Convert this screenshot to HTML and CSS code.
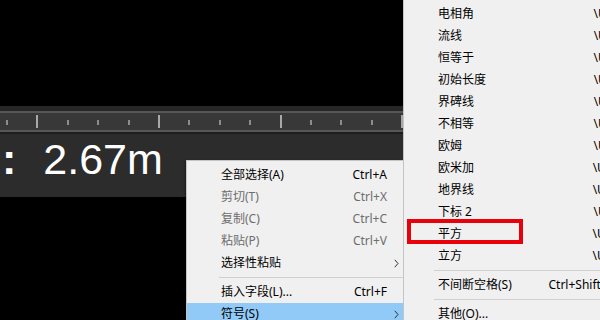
FILE: index.html
```html
<!DOCTYPE html>
<html lang="zh-CN">
<head>
<meta charset="utf-8">
<title>CAD 符号菜单</title>
<link rel="stylesheet" href="styles.css">
</head>
<body>
<div class="screen">
  <div class="canvas-top"></div>
  <div class="ruler-pre"></div>
  <div class="ruler-line"></div>
  <div class="ruler">
    <span class="tick"></span><span class="tick major"></span><span class="tick"></span><span class="tick"></span><span class="tick"></span><span class="tick major"></span><span class="tick"></span><span class="tick"></span><span class="tick"></span><span class="tick major"></span><span class="tick"></span><span class="tick"></span><span class="tick"></span><span class="tick major"></span>
  </div>
  <div class="ruler-line"></div>
  <div class="ruler-gap"></div>
  <div class="readout"><span class="colon">:</span><span class="value">2.67m</span></div>

  <div class="menu context">
    <div class="item"><span class="label">全部选择(A)</span><span class="key">Ctrl+A</span><span class="arrow"></span></div>
    <div class="item disabled"><span class="label">剪切(T)</span><span class="key">Ctrl+X</span><span class="arrow"></span></div>
    <div class="item disabled"><span class="label">复制(C)</span><span class="key">Ctrl+C</span><span class="arrow"></span></div>
    <div class="item disabled"><span class="label">粘贴(P)</span><span class="key">Ctrl+V</span><span class="arrow"></span></div>
    <div class="item"><span class="label">选择性粘贴</span><span class="key"></span><span class="arrow"><svg width="5" height="9" viewBox="0 0 5 9"><path d="M0.8 0.8 L4 4.5 L0.8 8.2" fill="none" stroke="#333" stroke-width="1"/></svg></span></div>
    <div class="sep"></div>
    <div class="item"><span class="label">插入字段(L)...</span><span class="key">Ctrl+F</span><span class="arrow"></span></div>
    <div class="item active"><span class="label">符号(S)</span><span class="key"></span><span class="arrow"><svg width="5" height="9" viewBox="0 0 5 9"><path d="M0.8 0.8 L4 4.5 L0.8 8.2" fill="none" stroke="#333" stroke-width="1"/></svg></span></div>
  </div>

  <div class="menu submenu">
    <div class="item"><span class="label">电相角</span><span class="key">\U+0278</span></div>
    <div class="item"><span class="label">流线</span><span class="key">\U+E101</span></div>
    <div class="item"><span class="label">恒等于</span><span class="key">\U+2261</span></div>
    <div class="item"><span class="label">初始长度</span><span class="key">\U+E200</span></div>
    <div class="item"><span class="label">界碑线</span><span class="key">\U+E102</span></div>
    <div class="item"><span class="label">不相等</span><span class="key">\U+2260</span></div>
    <div class="item"><span class="label">欧姆</span><span class="key">\U+2126</span></div>
    <div class="item"><span class="label">欧米加</span><span class="key">\U+03A9</span></div>
    <div class="item"><span class="label">地界线</span><span class="key">\U+214A</span></div>
    <div class="item"><span class="label">下标 2</span><span class="key">\U+2082</span></div>
    <div class="item"><span class="label">平方</span><span class="key">\U+00B2</span></div>
    <div class="item"><span class="label">立方</span><span class="key">\U+00B3</span></div>
    <div class="sep"></div>
    <div class="item"><span class="label">不间断空格(S)</span><span class="key">Ctrl+Shift+Space</span></div>
    <div class="sep"></div>
    <div class="item"><span class="label">其他(O)...</span><span class="key"></span></div>
  </div>

  <div class="mark"></div>
</div>
</body>
</html>
```

FILE: styles.css
```css
html, body {
  margin: 0;
  padding: 0;
  background: #000;
}

.screen {
  position: relative;
  width: 600px;
  height: 320px;
  overflow: hidden;
  background: #000;
}

.canvas-top {
  height: 106px;
  background: #000;
}

.ruler-pre {
  height: 5px;
  background: #262626;
}

.ruler-line {
  height: 2px;
  background: #575757;
}

.ruler {
  height: 17px;
  background: #383838;
  display: flex;
  padding-left: 6px;
}

.tick {
  flex: 0 0 30.4px;
  position: relative;
}

.tick::before {
  content: "";
  position: absolute;
  left: 0;
  top: 7px;
  width: 2px;
  height: 5px;
  background: #8c8c8c;
}

.tick.major::before {
  top: 2px;
  height: 13px;
  background: #a8a8a8;
}

.ruler-gap {
  height: 2px;
  background: #1e1e1e;
}

.readout {
  height: 59px;
  padding-top: 4px;
  background: #2c2c2c;
  display: flex;
  gap: 27px;
  padding-left: 2px;
  color: #fff;
  font-family: "Liberation Sans", Arial, sans-serif;
  font-size: 43px;
  line-height: 43px;
}

.colon {
  font-weight: bold;
}

/* Menus */
.menu {
  position: absolute;
  box-sizing: border-box;
  background: #f0f0f0;
  font-family: "Noto Sans", "Noto Sans CJK SC", sans-serif;
  font-size: 12px;
  color: #000;
}

.context {
  left: 186px;
  top: 160px;
  width: 218px;
  height: 200px;
  border: 1px solid #c4c4c4;
  padding: 3px 0 2px;
  box-shadow: -1px 1px 2px rgba(0, 0, 0, 0.35);
}

.submenu {
  left: 403px;
  top: 0;
  width: 258px;
  height: 340px;
  border-left: 1px solid #c4c4c4;
  padding-top: 3px;
}

.item {
  height: 22px;
  line-height: 22px;
  display: grid;
  align-items: center;
  white-space: nowrap;
}

.context .item {
  grid-template-columns: 1fr auto 16px;
  padding-left: 34px;
}

.submenu .item {
  grid-template-columns: 1fr auto;
  padding-left: 34px;
  padding-right: 20px;
}

.key {
  text-align: right;
}

.arrow {
  display: flex;
  justify-content: center;
  align-items: center;
  height: 22px;
  padding-left: 2px;
}

.item.disabled {
  color: #6d6d6d;
}

.item.active {
  background: #91c9f7;
}

.sep {
  height: 7px;
  position: relative;
}

.sep::before {
  content: "";
  position: absolute;
  right: 0;
  top: 3px;
  height: 1px;
  background: #d0d0d0;
}

.context .sep::before {
  left: 32px;
}

.submenu .sep::before {
  left: 30px;
}

.mark {
  position: absolute;
  left: 407px;
  top: 219px;
  width: 116px;
  height: 25px;
  box-sizing: border-box;
  border: 4px solid #e8000a;
}
```
